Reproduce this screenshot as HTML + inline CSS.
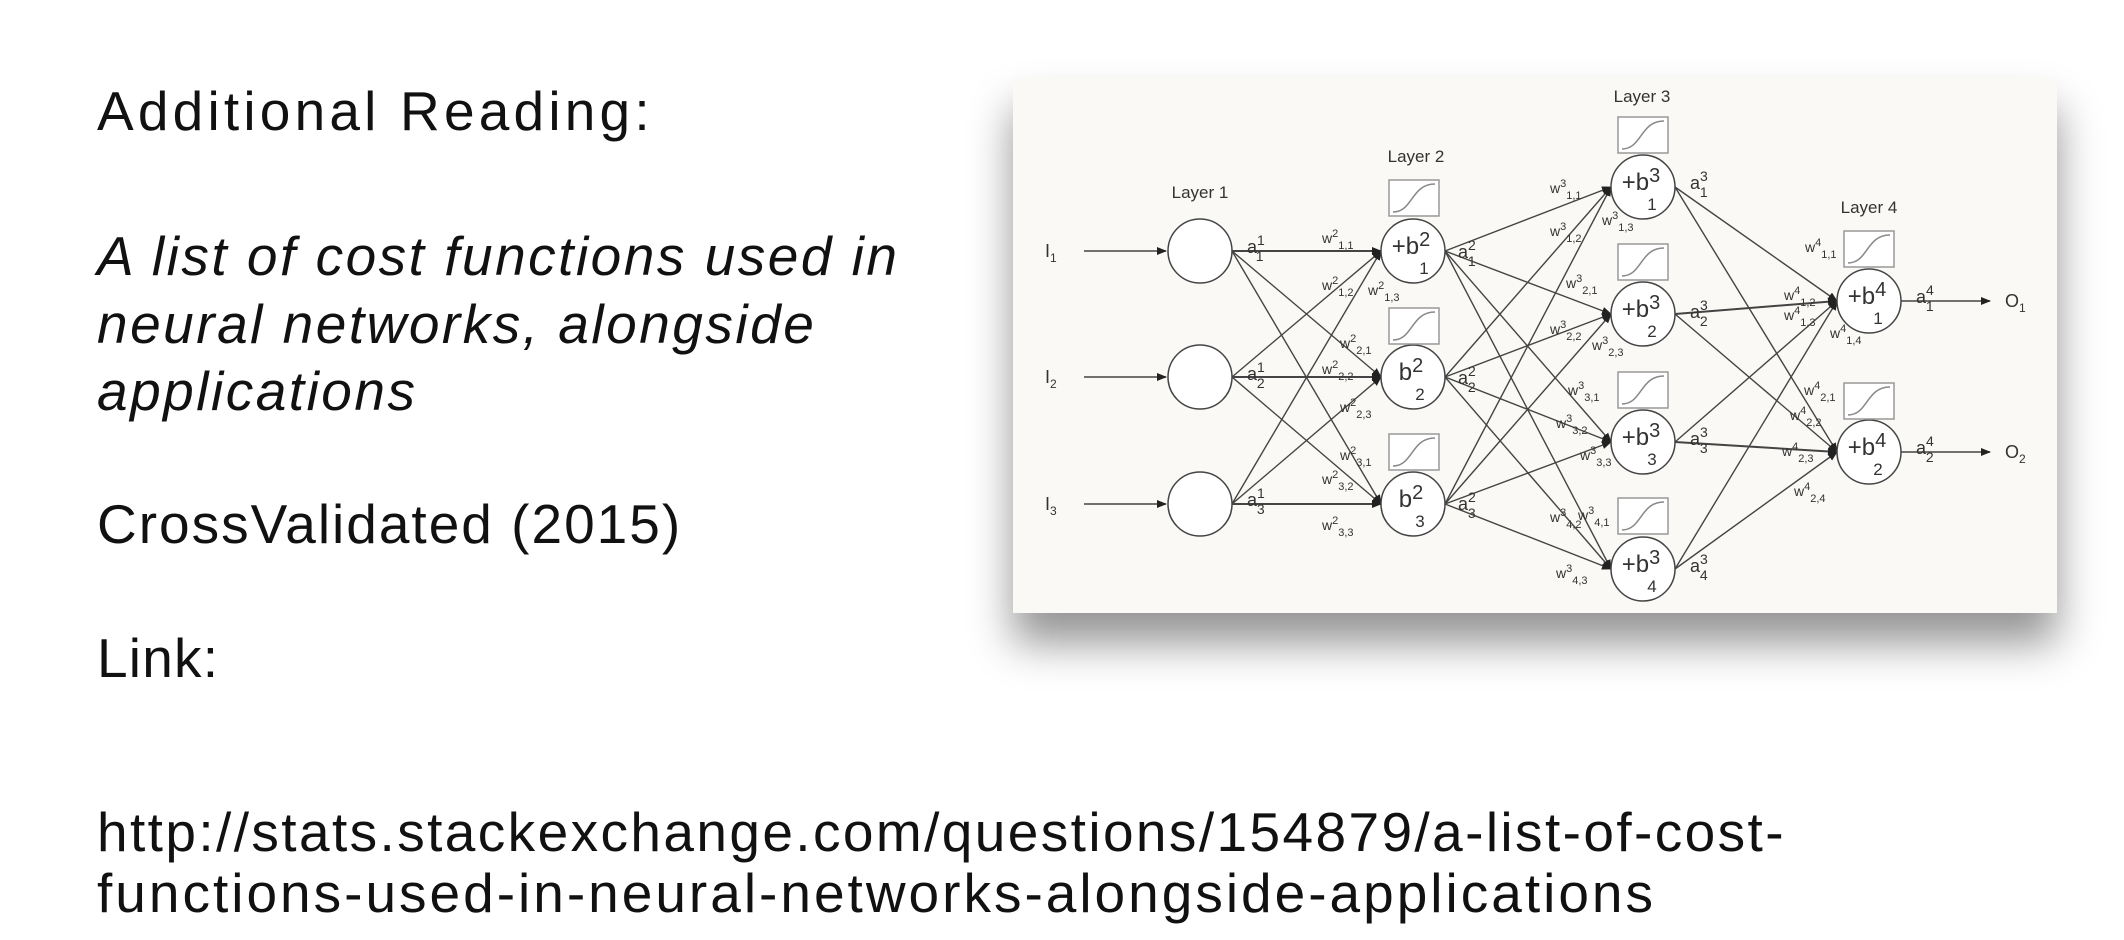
<!DOCTYPE html>
<html><head><meta charset="utf-8">
<style>
html,body{margin:0;padding:0;background:#fff;width:2124px;height:940px;overflow:hidden;}
.t{position:absolute;left:97px;font-family:"Liberation Sans",sans-serif;font-size:55px;color:#111;letter-spacing:2.4px;white-space:nowrap;line-height:1;}
.i{font-style:italic;letter-spacing:2.5px;}
#fig{position:absolute;left:1013px;top:78px;width:1044px;height:535px;background:#faf9f6;box-shadow:0 30px 40px rgba(0,0,0,0.42);}
svg{position:absolute;left:0;top:0;}
svg text{font-family:"Liberation Sans",sans-serif;fill:#333;}
</style></head><body>
<div class="t" style="top:84px;letter-spacing:4.2px">Additional Reading:</div>
<div class="t i" style="top:229px">A list of cost functions used in</div>
<div class="t i" style="top:297px">neural networks, alongside</div>
<div class="t i" style="top:364px">applications</div>
<div class="t" style="top:497px;letter-spacing:2px">CrossValidated (2015)</div>
<div class="t" style="top:631px;letter-spacing:1.2px">Link:</div>
<div class="t" style="top:805px">http://stats.stackexchange.com/questions/154879/a-list-of-cost-</div>
<div class="t" style="top:866px;letter-spacing:3px">functions-used-in-neural-networks-alongside-applications</div>
<div id="fig"></div>
<svg width="2124" height="940" viewBox="0 0 2124 940">
<defs><marker id="ar" markerWidth="10" markerHeight="8" refX="9" refY="4" orient="auto" markerUnits="userSpaceOnUse"><path d="M0,0 L10,4 L0,8z" fill="#222"/></marker>
<g id="sig"><rect x="0" y="0" width="50" height="36" fill="#fff" stroke="#999" stroke-width="1.5"/><path d="M4,32 C24,32 22,4 46,4" fill="none" stroke="#888" stroke-width="1.5"/></g></defs>
<g stroke="#444" stroke-width="1.4" fill="none" marker-end="url(#ar)">
<line x1="1084" y1="251" x2="1166" y2="251"/><line x1="1084" y1="377" x2="1166" y2="377"/><line x1="1084" y1="504" x2="1166" y2="504"/>
<line x1="1232" y1="251" x2="1381" y2="251" stroke-width="2"/><line x1="1232" y1="251" x2="1381" y2="377"/><line x1="1232" y1="251" x2="1381" y2="504"/>
<line x1="1232" y1="377" x2="1381" y2="251"/><line x1="1232" y1="377" x2="1381" y2="377" stroke-width="2"/><line x1="1232" y1="377" x2="1381" y2="504"/>
<line x1="1232" y1="504" x2="1381" y2="251"/><line x1="1232" y1="504" x2="1381" y2="377"/><line x1="1232" y1="504" x2="1381" y2="504" stroke-width="2"/>
<line x1="1445" y1="251" x2="1611" y2="187"/><line x1="1445" y1="251" x2="1611" y2="314"/><line x1="1445" y1="251" x2="1611" y2="442"/><line x1="1445" y1="251" x2="1611" y2="569"/>
<line x1="1445" y1="377" x2="1611" y2="187"/><line x1="1445" y1="377" x2="1611" y2="314"/><line x1="1445" y1="377" x2="1611" y2="442"/><line x1="1445" y1="377" x2="1611" y2="569"/>
<line x1="1445" y1="504" x2="1611" y2="187"/><line x1="1445" y1="504" x2="1611" y2="314"/><line x1="1445" y1="504" x2="1611" y2="442"/><line x1="1445" y1="504" x2="1611" y2="569"/>
<line x1="1675" y1="187" x2="1837" y2="301"/><line x1="1675" y1="187" x2="1837" y2="452"/>
<line x1="1675" y1="314" x2="1837" y2="301" stroke-width="2"/><line x1="1675" y1="314" x2="1837" y2="452"/>
<line x1="1675" y1="442" x2="1837" y2="301"/><line x1="1675" y1="442" x2="1837" y2="452" stroke-width="2"/>
<line x1="1675" y1="569" x2="1837" y2="301"/><line x1="1675" y1="569" x2="1837" y2="452"/>
<line x1="1901" y1="301" x2="1990" y2="301"/><line x1="1901" y1="452" x2="1990" y2="452"/>
</g>
<g fill="#fff" stroke="#444" stroke-width="1.5">
<circle cx="1200" cy="251" r="32"/><circle cx="1200" cy="377" r="32"/><circle cx="1200" cy="504" r="32"/>
<circle cx="1413" cy="251" r="32"/><circle cx="1413" cy="377" r="32"/><circle cx="1413" cy="504" r="32"/>
<circle cx="1643" cy="187" r="32"/><circle cx="1643" cy="314" r="32"/><circle cx="1643" cy="442" r="32"/><circle cx="1643" cy="569" r="32"/>
<circle cx="1869" cy="301" r="32"/><circle cx="1869" cy="452" r="32"/>
</g>
<use href="#sig" x="1389" y="180"/><use href="#sig" x="1389" y="308"/><use href="#sig" x="1389" y="434"/>
<use href="#sig" x="1618" y="117"/><use href="#sig" x="1618" y="244"/><use href="#sig" x="1618" y="372"/><use href="#sig" x="1618" y="498"/>
<use href="#sig" x="1844" y="231"/><use href="#sig" x="1844" y="383"/>
<g font-size="17" text-anchor="middle">
<text x="1200" y="198">Layer 1</text><text x="1416" y="162">Layer 2</text><text x="1642" y="102">Layer 3</text><text x="1869" y="213">Layer 4</text>
</g>
<g font-size="18">
<text x="1045" y="257">I<tspan font-size="12" dy="5">1</tspan></text>
<text x="1045" y="383">I<tspan font-size="12" dy="5">2</tspan></text>
<text x="1045" y="510">I<tspan font-size="12" dy="5">3</tspan></text>
<text x="2005" y="307">O<tspan font-size="12" dy="5">1</tspan></text>
<text x="2005" y="458">O<tspan font-size="12" dy="5">2</tspan></text>
</g>
<g font-size="24" text-anchor="middle">
<text x="1411" y="254">+b<tspan font-size="20" dy="-8">2</tspan></text><text x="1424" y="274" font-size="17">1</text>
<text x="1411" y="380">b<tspan font-size="20" dy="-8">2</tspan></text><text x="1420" y="400" font-size="17">2</text>
<text x="1411" y="507">b<tspan font-size="20" dy="-8">2</tspan></text><text x="1420" y="527" font-size="17">3</text>
<text x="1641" y="190">+b<tspan font-size="20" dy="-8">3</tspan></text><text x="1652" y="210" font-size="17">1</text>
<text x="1641" y="317">+b<tspan font-size="20" dy="-8">3</tspan></text><text x="1652" y="337" font-size="17">2</text>
<text x="1641" y="445">+b<tspan font-size="20" dy="-8">3</tspan></text><text x="1652" y="465" font-size="17">3</text>
<text x="1641" y="572">+b<tspan font-size="20" dy="-8">3</tspan></text><text x="1652" y="592" font-size="17">4</text>
<text x="1867" y="304">+b<tspan font-size="20" dy="-8">4</tspan></text><text x="1878" y="324" font-size="17">1</text>
<text x="1867" y="455">+b<tspan font-size="20" dy="-8">4</tspan></text><text x="1878" y="475" font-size="17">2</text>
</g>
<g font-size="18">
<text x="1247" y="253">a<tspan font-size="14" dy="-8">1</tspan><tspan font-size="14" dx="-8" dy="16">1</tspan></text>
<text x="1247" y="380">a<tspan font-size="14" dy="-8">1</tspan><tspan font-size="14" dx="-8" dy="16">2</tspan></text>
<text x="1247" y="506">a<tspan font-size="14" dy="-8">1</tspan><tspan font-size="14" dx="-8" dy="16">3</tspan></text>
<text x="1458" y="258">a<tspan font-size="14" dy="-8">2</tspan><tspan font-size="14" dx="-8" dy="16">1</tspan></text>
<text x="1458" y="384">a<tspan font-size="14" dy="-8">2</tspan><tspan font-size="14" dx="-8" dy="16">2</tspan></text>
<text x="1458" y="510">a<tspan font-size="14" dy="-8">2</tspan><tspan font-size="14" dx="-8" dy="16">3</tspan></text>
<text x="1690" y="189">a<tspan font-size="14" dy="-8">3</tspan><tspan font-size="14" dx="-8" dy="16">1</tspan></text>
<text x="1690" y="318">a<tspan font-size="14" dy="-8">3</tspan><tspan font-size="14" dx="-8" dy="16">2</tspan></text>
<text x="1690" y="445">a<tspan font-size="14" dy="-8">3</tspan><tspan font-size="14" dx="-8" dy="16">3</tspan></text>
<text x="1690" y="572">a<tspan font-size="14" dy="-8">3</tspan><tspan font-size="14" dx="-8" dy="16">4</tspan></text>
<text x="1916" y="303">a<tspan font-size="14" dy="-8">4</tspan><tspan font-size="14" dx="-8" dy="16">1</tspan></text>
<text x="1916" y="454">a<tspan font-size="14" dy="-8">4</tspan><tspan font-size="14" dx="-8" dy="16">2</tspan></text>
</g>
<g font-size="14">
<text x="1322" y="243">w<tspan font-size="11" dy="-6">2</tspan><tspan font-size="11" dy="12">1,1</tspan></text>
<text x="1322" y="290">w<tspan font-size="11" dy="-6">2</tspan><tspan font-size="11" dy="12">1,2</tspan></text>
<text x="1368" y="295">w<tspan font-size="11" dy="-6">2</tspan><tspan font-size="11" dy="12">1,3</tspan></text>
<text x="1340" y="348">w<tspan font-size="11" dy="-6">2</tspan><tspan font-size="11" dy="12">2,1</tspan></text>
<text x="1322" y="374">w<tspan font-size="11" dy="-6">2</tspan><tspan font-size="11" dy="12">2,2</tspan></text>
<text x="1340" y="412">w<tspan font-size="11" dy="-6">2</tspan><tspan font-size="11" dy="12">2,3</tspan></text>
<text x="1340" y="460">w<tspan font-size="11" dy="-6">2</tspan><tspan font-size="11" dy="12">3,1</tspan></text>
<text x="1322" y="484">w<tspan font-size="11" dy="-6">2</tspan><tspan font-size="11" dy="12">3,2</tspan></text>
<text x="1322" y="530">w<tspan font-size="11" dy="-6">2</tspan><tspan font-size="11" dy="12">3,3</tspan></text>
<text x="1550" y="193">w<tspan font-size="11" dy="-6">3</tspan><tspan font-size="11" dy="12">1,1</tspan></text>
<text x="1550" y="236">w<tspan font-size="11" dy="-6">3</tspan><tspan font-size="11" dy="12">1,2</tspan></text>
<text x="1602" y="225">w<tspan font-size="11" dy="-6">3</tspan><tspan font-size="11" dy="12">1,3</tspan></text>
<text x="1566" y="288">w<tspan font-size="11" dy="-6">3</tspan><tspan font-size="11" dy="12">2,1</tspan></text>
<text x="1550" y="334">w<tspan font-size="11" dy="-6">3</tspan><tspan font-size="11" dy="12">2,2</tspan></text>
<text x="1592" y="350">w<tspan font-size="11" dy="-6">3</tspan><tspan font-size="11" dy="12">2,3</tspan></text>
<text x="1568" y="395">w<tspan font-size="11" dy="-6">3</tspan><tspan font-size="11" dy="12">3,1</tspan></text>
<text x="1556" y="428">w<tspan font-size="11" dy="-6">3</tspan><tspan font-size="11" dy="12">3,2</tspan></text>
<text x="1580" y="460">w<tspan font-size="11" dy="-6">3</tspan><tspan font-size="11" dy="12">3,3</tspan></text>
<text x="1578" y="520">w<tspan font-size="11" dy="-6">3</tspan><tspan font-size="11" dy="12">4,1</tspan></text>
<text x="1550" y="522">w<tspan font-size="11" dy="-6">3</tspan><tspan font-size="11" dy="12">4,2</tspan></text>
<text x="1556" y="578">w<tspan font-size="11" dy="-6">3</tspan><tspan font-size="11" dy="12">4,3</tspan></text>
<text x="1805" y="252">w<tspan font-size="11" dy="-6">4</tspan><tspan font-size="11" dy="12">1,1</tspan></text>
<text x="1784" y="300">w<tspan font-size="11" dy="-6">4</tspan><tspan font-size="11" dy="12">1,2</tspan></text>
<text x="1784" y="320">w<tspan font-size="11" dy="-6">4</tspan><tspan font-size="11" dy="12">1,3</tspan></text>
<text x="1830" y="338">w<tspan font-size="11" dy="-6">4</tspan><tspan font-size="11" dy="12">1,4</tspan></text>
<text x="1804" y="395">w<tspan font-size="11" dy="-6">4</tspan><tspan font-size="11" dy="12">2,1</tspan></text>
<text x="1790" y="420">w<tspan font-size="11" dy="-6">4</tspan><tspan font-size="11" dy="12">2,2</tspan></text>
<text x="1782" y="456">w<tspan font-size="11" dy="-6">4</tspan><tspan font-size="11" dy="12">2,3</tspan></text>
<text x="1794" y="496">w<tspan font-size="11" dy="-6">4</tspan><tspan font-size="11" dy="12">2,4</tspan></text>
</g>
</svg>
</body></html>
